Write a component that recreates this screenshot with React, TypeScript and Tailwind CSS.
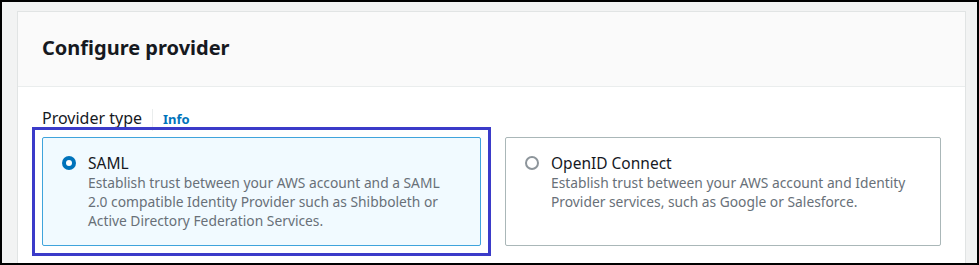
import React from 'react';

function Radio({ checked }: { checked: boolean }) {
  if (checked) {
    return (
      <span className="mt-[3px] flex h-[14px] w-[14px] shrink-0 items-center justify-center rounded-full bg-[#0073bb]">
        <span className="h-[6px] w-[6px] rounded-full bg-white" />
      </span>
    );
  }
  return <span className="mt-[3px] h-[14px] w-[14px] shrink-0 rounded-full border-2 border-[#8d959b] bg-white" />;
}

function ProviderCard({ title, lines, checked }: { title: string; lines: string[]; checked: boolean }) {
  return (
    <div
      className={
        checked
          ? 'flex h-[109px] w-[439px] gap-3 rounded-[2px] border border-[#3fa4dc] bg-[#f1faff] pl-[19px] pt-[15px]'
          : 'flex h-[109px] w-[438px] gap-3 rounded-[2px] border border-[#aab7b8] bg-white pl-[19px] pt-[15px]'
      }
    >
      <Radio checked={checked} />
      <div>
        <div className="text-[15.5px] leading-[20px] text-[#16191f]">{title}</div>
        <div className="mt-[1px] text-[13.8px] leading-[18.8px] text-[#687078]">
          {lines.map((l) => (
            <div key={l}>{l}</div>
          ))}
        </div>
      </div>
    </div>
  );
}

export default function App() {
  return (
    <div
      className="h-[265px] w-[979px] overflow-hidden border-2 border-black bg-[#f2f3f3] pl-[15px] pr-[11px] pt-[9px]"
      style={{ fontFamily: '"Noto Sans", "Open Sans", sans-serif' }}
    >
      <div className="h-[300px] border border-b-0 border-[#e1e4e4] bg-white">
        <div className="flex h-[75px] items-center border-b border-[#eaeded] bg-[#fafafa] px-[24px] pb-[2px]">
          <h2 className="text-[20px] font-bold text-[#16191f]">Configure provider</h2>
        </div>
        <div className="px-[24px] pt-[20px]">
          <div className="flex items-end">
            <span className="text-[16px] leading-[22px] text-[#16191f]">Provider type</span>
            <span className="mx-[10px] mb-[-2px] h-[22px] w-px bg-[#eaeded]" />
            <span className="text-[13px] font-bold leading-[20px] text-[#0073bb]">Info</span>
          </div>
          <div className="mt-[8px] flex gap-[24px]">
            <div className="outline-[3px] outline-offset-[7px] outline-[#3b3bc9]">
              <ProviderCard
                checked
                title="SAML"
                lines={[
                  'Establish trust between your AWS account and a SAML',
                  '2.0 compatible Identity Provider such as Shibboleth or',
                  'Active Directory Federation Services.',
                ]}
              />
            </div>
            <ProviderCard
              checked={false}
              title="OpenID Connect"
              lines={[
                'Establish trust between your AWS account and Identity',
                'Provider services, such as Google or Salesforce.',
              ]}
            />
          </div>
        </div>
      </div>
    </div>
  );
}
